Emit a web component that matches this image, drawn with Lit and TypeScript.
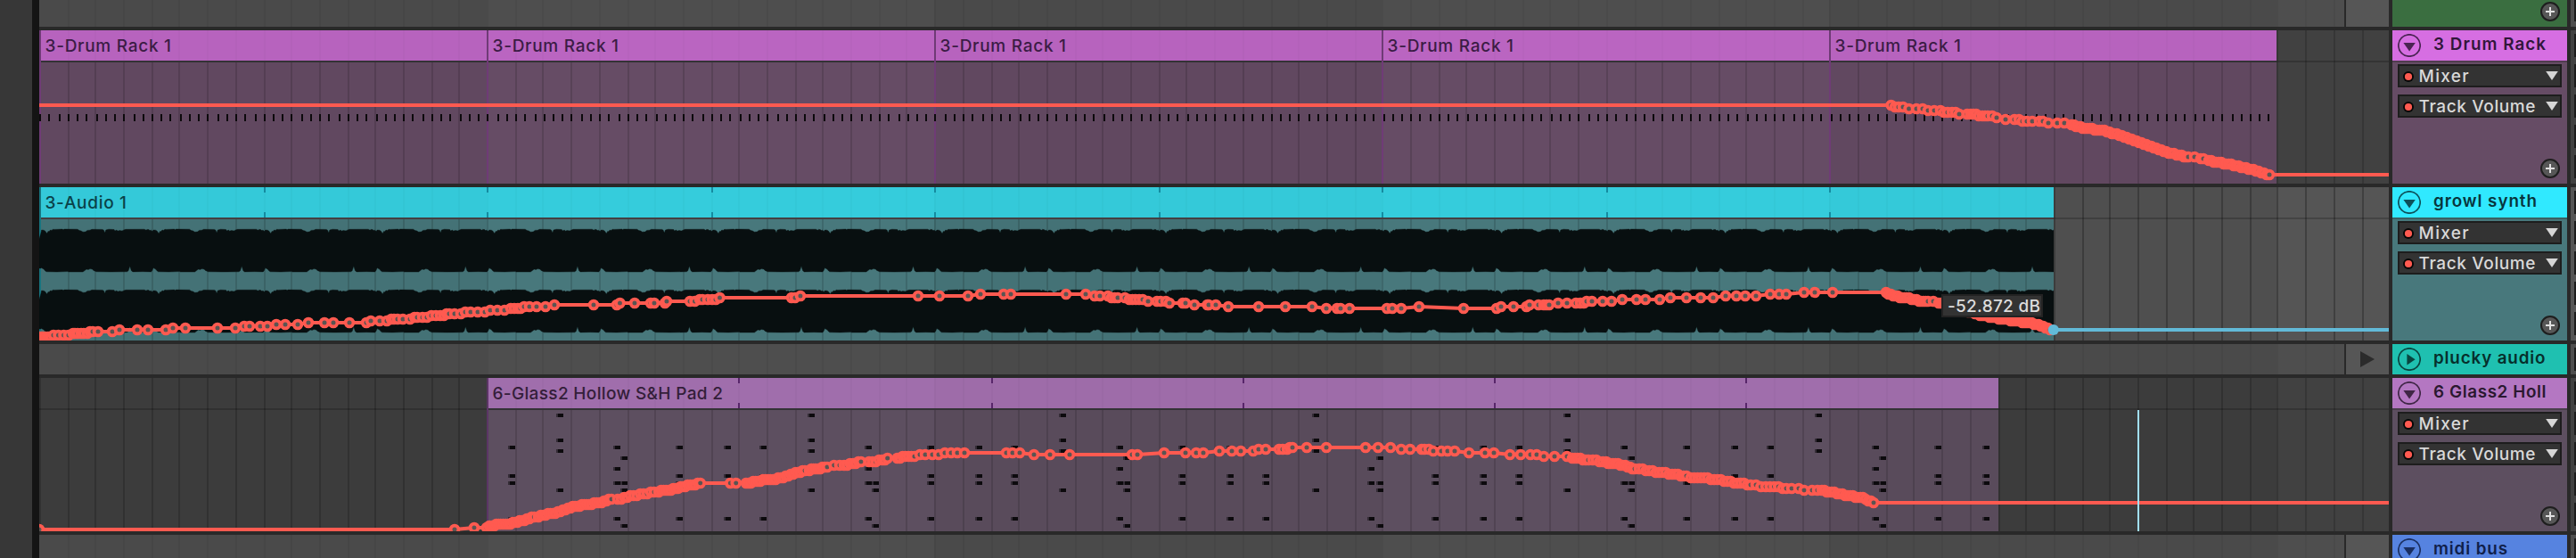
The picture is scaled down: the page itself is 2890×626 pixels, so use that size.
import { LitElement, html, svg, css, nothing } from "lit";
import { customElement, property } from "lit/decorators.js";

type Pt = [number, number];
interface Clip { from: number; to: number; name: string; marks?: number[] }
interface Lane {
  kind: "open" | "folded";
  top: number;
  height: number;
  base: string;
  grid: number;
  title?: string;
  color: string;
  panel?: string;
  ink?: string;
  clipHead?: string;
  clipBody?: string;
  clipEdge?: string;
  clipMark?: string;
  rule?: string;
  titleWidth?: number;
  labelWidth?: number;
  clips?: Clip[];
  content?: "ticks" | "wave" | "notes";
  play?: boolean;
}

const LEFT = 44;
const RIGHT = 2680;
const STEP = 31.387;
const RED = "#ff5a50";
const BLUE = "#62bad8";
const snap = (x: number) => 2 * Math.floor(x / 2);
const gridX = (k: number) => (k === 0 ? LEFT : snap(45 + STEP * k));

/* Fills a polyline with evenly spaced breakpoints. */
const run = (pts: Pt[], gap = 2.7): Pt[] => {
  const out: Pt[] = [];
  for (let i = 0; i < pts.length - 1; i++) {
    const [x0, y0] = pts[i];
    const [x1, y1] = pts[i + 1];
    const n = Math.max(1, Math.round((x1 - x0) / gap));
    for (let j = 0; j < n; j++) {
      out.push([x0 + ((x1 - x0) * j) / n, y0 + ((y1 - y0) * j) / n]);
    }
  }
  out.push(pts[pts.length - 1]);
  return out;
};
/* Breakpoints that share one level. */
const at = (y: number, ...xs: number[]): Pt[] => xs.map((x) => [x, y] as Pt);
/* Levels land on whole display points, two pixels each. */
const level = (pts: Pt[]): Pt[] => pts.map(([x, y]) => [x, 2 * Math.round(y / 2)] as Pt);

const drumNodes: Pt[] = level([
  ...at(118.5, 2121.6), ...at(120, 2126, 2130, 2135), ...at(122, 2141.6, 2150), ...at(122, 2157),
  ...at(124, 2163, 2170, 2177), ...at(125, 2181, 2185), ...at(126, 2190, 2194), ...at(128, 2198, 2207),
  ...at(128, 2211, 2214, 2217), ...at(130, 2220, 2224, 2227, 2230, 2235), ...at(132, 2240),
  ...at(134, 2250, 2260), ...at(134, 2265), ...at(136, 2269, 2274, 2280, 2288), ...at(136, 2292),
  ...at(138, 2298, 2308, 2316),
  ...run([[2324, 140], [2339, 144], [2361, 146.5], [2386, 154], [2408, 162], [2433, 171], [2445, 174.5], [2455, 176]]),
  ...at(176, 2462), ...at(177, 2469, 2472),
  ...run([[2478, 180], [2506, 185], [2531, 191], [2546, 196]], 2.8),
]);
const audioNodes: Pt[] = level([
  ...at(378, 45, 48, 51), ...at(377, 54, 57), ...at(376, 60, 65.5, 71.5, 77), ...at(374.5, 82),
  ...at(374, 84, 87, 91, 94, 98), ...at(372, 101, 104, 110, 126), ...at(370, 134, 154, 166, 186),
  ...at(368, 194, 208, 244, 264), ...at(366, 274, 280, 292, 300), ...at(364, 310, 320, 334),
  ...at(362, 346, 364, 374, 392), ...at(361, 411), ...at(360, 416, 426, 434), ...at(358, 439, 442, 446, 452, 460),
  ...at(356.5, 465), ...at(356, 468, 474, 479), ...at(354, 484, 489, 494, 498), ...at(352, 501, 504, 510, 517),
  ...at(350, 522, 528, 536, 544), ...at(348, 550, 558, 566), ...at(346, 573, 577, 581, 584),
  ...at(344, 588, 594, 602, 612), ...at(342, 622, 666, 692), ...at(340, 695.5, 712, 730, 734), ...at(339, 746),
  ...at(338, 748, 774, 779.5), ...at(336.5, 785, 788), ...at(336, 794, 799), ...at(335, 803),
  ...at(334, 807.5, 888, 892), ...at(332, 898, 1030, 1054, 1086), ...at(330, 1100, 1126, 1134, 1196, 1218),
  ...at(332, 1228, 1234, 1243), ...at(333, 1247, 1250.5), ...at(334, 1254, 1262), ...at(335.5, 1267, 1270.5, 1274),
  ...at(336.5, 1278, 1282), ...at(338, 1288, 1298, 1302, 1308), ...at(340, 1312, 1327, 1330),
  ...at(342, 1340), ...at(342, 1354.5, 1356, 1364), ...at(343.5, 1378), ...at(344, 1412, 1442, 1472),
  ...at(346, 1488, 1500, 1504, 1514, 1556, 1562, 1572), ...at(344, 1592), ...at(345.5, 1642, 1679),
  ...at(344, 1684, 1698), ...at(343, 1712.5), ...at(342, 1716, 1726, 1732, 1735, 1738),
  ...at(340, 1748, 1758, 1768, 1773), ...at(339, 1777), ...at(338, 1780, 1786, 1798, 1808),
  ...at(336, 1820, 1836, 1846, 1862), ...at(334, 1874, 1892, 1908, 1922), ...at(332, 1936, 1948, 1958, 1970),
  ...at(330, 1986, 1996, 2004), ...at(328, 2024, 2036, 2056),
  ...run([[2116, 328], [2124, 332], [2139, 334], [2153, 337], [2163, 338]]),
  ...at(338, 2169), ...run([[2175, 339], [2224, 354], [2261, 360], [2282, 363], [2300, 369]]),
]);
const padNodes: Pt[] = level([
  ...at(594, 44, 510), ...at(592, 532),
  ...run([[546, 592], [552, 589.5], [561.7, 588], [570, 588], [583, 584.5], [599.3, 580]]),
  ...run([[604, 579.5], [623, 575], [640, 569], [658, 566], [675, 563], [683, 560.5]]),
  ...at(560, 686, 693),
  ...run([[697, 559], [707, 556.7], [722, 554]], 3.6),
  ...run([[726, 553], [734, 552]], 4),
  ...run([[739, 551], [750, 550], [766, 546], [777, 543.5], [785.7, 542]]),
  ...at(542, 819.3, 825.7),
  ...run([[837, 542], [853, 539], [873, 536.7], [890, 531.7], [903, 528]]),
  ...run([[908, 527], [915, 526], [928, 524]]), ...at(522, 935.7, 942),
  ...run([[947, 521.5], [957, 520], [966, 518]], 3.2),
  ...run([[975, 518], [990, 516], [995.7, 514]], 3.4),
  ...run([[1006.7, 514], [1015.7, 512], [1026, 512]], 3.4),
  ...at(510.5, 1032, 1038, 1046, 1053), ...at(508.5, 1060, 1067, 1074, 1082),
  ...at(508, 1129, 1136, 1144), ...at(510, 1160, 1178, 1200, 1270, 1276),
  ...at(508, 1306, 1330, 1342, 1350), ...at(506.5, 1368), ...at(506, 1382, 1392, 1406),
  ...at(504, 1412, 1420, 1435, 1439, 1444), ...at(502.5, 1447, 1450), ...at(502, 1466, 1488, 1532, 1546, 1560),
  ...at(503, 1572), ...at(504, 1582, 1595, 1598), ...at(504.5, 1603), ...at(506, 1608, 1617, 1624), ...at(506.5, 1632),
  ...at(508, 1648, 1666, 1676), ...at(509.5, 1694), ...at(510, 1706, 1717, 1724), ...at(511, 1732),
  ...at(512, 1744, 1758),
  ...run([[1764, 513.5], [1773, 514.5], [1782, 516]], 3.4),
  ...run([[1787, 516.5], [1802, 518]], 4),
  ...run([[1804, 519], [1818, 521], [1834, 526]]),
  ...run([[1839, 526], [1854, 528.5], [1876, 532], [1892, 534]], 3.4),
  ...run([[1897, 535], [1912, 536], [1938, 540], [1964, 543.5]], 3.6),
  ...run([[1970, 544.5], [1981, 546], [2000, 547]], 5),
  ...at(548, 2004, 2010, 2018), ...at(549.5, 2024, 2033, 2039),
  ...run([[2044, 550.5], [2055, 552], [2073, 556], [2090, 558.5], [2102, 564]], 3),
]);

/* One repeat of the waveform outline: [offset, dent depth]. */
const WAVE_TOP: Pt[] = [[0, 1.2], [1.5, 2.6], [2.6, 1], [5, 1.2], [6.5, 2], [8.7, 5], [10, 2.4], [11, 2.8], [12.5, 1], [14, 1.4], [15.5, .3], [17, .4], [26, .1], [27, .8], [28, .1], [43, .2], [45, 1.6], [47, 2], [49, 3.2], [52, 3], [54, 1.4], [57, 1.2], [59, .3], [71, .4], [72.4, 1.2], [73.7, 4.2], [74.8, 1], [78, .2], [84, .5], [85, 2], [87, 1], [88, 2.2], [90, 1.6], [93, 1.9], [95, .9], [97, .3], [118, .2], [120, 1.3], [121, .4], [123, .6], [124, 1.6]];
const WAVE_BOTTOM: Pt[] = [[0, .1], [1, 1], [2.6, 4.4], [4.2, 3.6], [5.2, 3], [6.6, 1.2], [8, .2], [20, 0], [32, .4], [33, 0], [49, 0], [51, 1.4], [53, 3], [55, 2.6], [57, 3.4], [59.5, 3], [61, 1.6], [64, .2], [80, 0], [98.5, .2], [100, 1.2], [101.7, 6.4], [103.4, 1.2], [105, .1], [116, .3]];
const wavePath = (top: number, bottom: number, end: number) => {
  const period = STEP * 4;
  const up: string[] = [];
  const down: string[] = [];
  for (let i = 0; i * period < end - LEFT; i++) {
    for (const [u, d] of WAVE_TOP) up.push(`${(LEFT + i * period + u).toFixed(1)} ${(top + d).toFixed(1)}`);
    for (const [u, d] of WAVE_BOTTOM) down.push(`${(LEFT + i * period + u).toFixed(1)} ${(bottom - d).toFixed(1)}`);
  }
  up[0] = `44 ${top + 11}`;
  up[1] = `46 ${top + 4}`;
  down[0] = `44 ${bottom - 4}`;
  down[1] = `45.5 ${bottom - 4}`;
  return `M${up.join("L")}L${end + 9} ${top}L${end + 9} ${bottom}L${down.reverse().join("L")}Z`;
};

const NOTES: [number, number[]][] = [
  [570.4, [502, 534, 542, 582]],
  [624.6, [466, 494, 506, 550]],
  [688.4, [502, 526, 542, 582]],
  [696.6, [514, 542, 550, 590]],
  [758.6, [502, 534, 542, 582]],
  [813, [502, 534, 542, 582]],
];

const LANES: Lane[] = [
  { kind: "folded", top: 0, height: 30, base: "#4e4e4e", grid: .05, color: "#3a6e40" },
  {
    kind: "open", top: 34, height: 172, base: "#414141", grid: .17, title: "3 Drum Rack", titleWidth: 124, color: "#d66ee2",
    panel: "#664c65", ink: "#31163a", clipHead: "#ba65c1", clipBody: "#664c65", clipEdge: "#6f3b76", clipMark: "#6f3b76",
    rule: "#343236", labelWidth: 139.5, content: "ticks",
    clips: [0, 16, 32, 48, 64].map((k) => ({ from: k, to: k + 16, name: "3-Drum Rack 1" })),
  },
  {
    kind: "open", top: 210, height: 172, base: "#555555", grid: .24, title: "growl synth", titleWidth: 114, color: "#30e9ff",
    panel: "#48787c", ink: "#07363d", clipHead: "#35ccdc", clipBody: "#48787c", clipEdge: "#17747f", clipMark: "#158ba0",
    rule: "#433f42", labelWidth: 89.5, content: "wave",
    clips: [{ from: 0, to: 72, name: "3-Audio 1", marks: [8, 16, 24, 32, 40, 48, 56, 64] }],
  },
  { kind: "folded", top: 386, height: 34, base: "#4e4e4e", grid: .05, title: "plucky audio", titleWidth: 123.5, color: "#1fc0b0", ink: "#062f2c", play: true },
  {
    kind: "open", top: 424, height: 172, base: "#414141", grid: .17, title: "6 Glass2 Holl", titleWidth: 124.5, color: "#b477c2",
    panel: "#5d4f60", ink: "#2b1830", clipHead: "#a06eac", clipBody: "#5d4f60", clipEdge: "#5b3565", clipMark: "#57256a",
    rule: "#343236", labelWidth: 256.5, content: "notes",
    clips: [{ from: 16, to: 70, name: "6-Glass2 Hollow S&H Pad 2", marks: [25, 34, 43, 52, 61] }],
  },
  { kind: "folded", top: 600, height: 26, base: "#4e4e4e", grid: .05, title: "midi bus", titleWidth: 81, color: "#5683e0", ink: "#10204a" },
];

/* Text tracked out to a fixed measure. */
@customElement("fit-label")
class FitLabel extends LitElement {
  @property() text = "";
  @property({ type: Number }) measure = 0;
  static styles = css`
    :host { display: block; white-space: pre; }
  `;
  render() {
    return html`<span>${this.text}</span>`;
  }
  updated() {
    const span = this.renderRoot.querySelector("span")!;
    span.style.letterSpacing = "0px";
    const natural = span.getBoundingClientRect().width;
    span.style.letterSpacing = `${(this.measure + 2 - natural) / (this.text.length - 1)}px`;
  }
}

@customElement("device-chooser")
class DeviceChooser extends LitElement {
  @property() label = "";
  @property({ type: Number }) measure = 0;
  static styles = css`
    :host { display: block; }
    .box {
      box-sizing: border-box; display: flex; align-items: center; width: 184px; height: 26px;
      border: 2px solid #1d1d1d; background: #333; color: #d9d9d9; padding: 0 2.5px 0 4px;
      font: 500 19px/20px Inter, sans-serif;
    }
    .led { width: 12px; height: 12px; margin: 2px 5.5px 0 0; flex: none; }
    .arrow { width: 14px; height: 10px; margin: 0 0 1px auto; flex: none; }
    fit-label { width: 132px; padding-top: 2px; }
  `;
  render() {
    return html`<div class="box">
      <svg class="led" viewBox="0 0 12 12"><circle cx="6" cy="6" r="6" fill="#060606" /><circle cx="6" cy="6" r="4.1" fill=${RED} /></svg>
      <fit-label .text=${this.label} .measure=${this.measure}></fit-label>
      <svg class="arrow" viewBox="0 0 14 10"><path d="M.2 0H13.8L7 10Z" fill="#d6d6d6" /></svg>
    </div>`;
  }
}

@customElement("track-header")
class TrackHeader extends LitElement {
  @property({ attribute: false }) lane!: Lane;
  static styles = css`
    :host { display: block; overflow: hidden; }
    .track { display: flex; flex-direction: column; height: 100%; }
    .title { flex: none; display: flex; height: 34px; padding-left: 6px; font: 600 18.8px/32px Inter, sans-serif; }
    .fold { width: 26px; height: 26px; margin: 4px 14px 0 0; flex: none; opacity: .85; }
    .rule { flex: none; height: 2px; background: rgba(0, 0, 0, .2); }
    .choosers { display: flex; flex-direction: column; gap: 8px; padding: 2px 0 0 6px; }
    .foot { margin: auto 8px 6px auto; width: 22px; height: 22px; }
  `;
  render() {
    const l = this.lane;
    const arrow = l.play ? "M10.4 7L19.6 13.2L10.4 19.6Z" : "M6.4 10H19.8L13.1 19.4Z";
    return html`<div class="track" style="background:${l.panel ?? l.color}">
      ${l.title
        ? html`<div class="title" style="background:${l.color};color:${l.ink}">
            <svg class="fold" viewBox="0 0 26 26">
              <circle cx="13" cy="13" r="12.2" fill="none" stroke=${l.ink!} stroke-width="1.7" />
              <path d=${arrow} fill=${l.ink!} />
            </svg>
            <fit-label .text=${l.title} .measure=${l.titleWidth!}></fit-label>
          </div>`
        : nothing}
      ${l.kind === "open"
        ? html`<div class="rule"></div>
            <div class="choosers">
              <device-chooser label="Mixer" .measure=${54}></device-chooser>
              <device-chooser label="Track Volume" .measure=${129}></device-chooser>
            </div>`
        : nothing}
      ${l.kind === "open" || !l.title
        ? html`<svg class="foot" viewBox="0 0 22 22">
            <circle cx="11" cy="11" r="10" fill="#575757" stroke="#1e1e1e" stroke-width="2" />
            <path d="M6 11H16M11 6V16" stroke="#e0e0e0" stroke-width="2" />
          </svg>`
        : nothing}
    </div>`;
  }
}

@customElement("track-lane")
class TrackLane extends LitElement {
  @property({ attribute: false }) lane!: Lane;
  static styles = css`
    :host { display: block; }
    .lane { display: grid; overflow: hidden; height: 100%; }
    .art, .names { grid-area: 1 / 1; min-width: 0; }
    .art { display: block; }
    .names { display: flex; height: 36px; font: 450 19px/36px Inter, sans-serif; }
    .name { flex: none; box-sizing: border-box; padding-left: 6.5px; opacity: .92; }
  `;

  grid(y: number, h: number, alpha: number, from = 1, to = 84) {
    const xs: number[] = [];
    for (let k = from; k < to; k++) xs.push(gridX(k));
    return svg`<path d=${xs.map((x) => `M${x} ${y}h2v${h}h-2z`).join("")} fill="#000" fill-opacity=${alpha} />`;
  }

  content(l: Lane) {
    if (l.content === "ticks") {
      let d = "";
      for (let k = 0; k < 240; k++) d += `M${k ? snap(45.5 + (k * STEP) / 3) : LEFT} 128h2v8h-2z`;
      return svg`<path d=${d} fill="#0c090c" />`;
    }
    if (l.content === "notes") {
      let dark = "";
      let soft = "";
      for (let r = 0; r < 6; r++) {
        for (const [x, ys] of NOTES) {
          const nx = snap(x + r * STEP * 9);
          if (nx > gridX(70) - 4) continue;
          for (const y of ys) {
            soft += `M${nx} ${y - 2}h2v4h-2z`;
            dark += `M${nx + 2} ${y - 2}h6v4h-6z`;
          }
        }
      }
      return svg`<path d=${soft} fill="#342c36" /><path d=${dark} fill="#0c0a0d" />`;
    }
    const end = gridX(72);
    return svg`
      <clipPath id="audio"><rect x=${LEFT} y="246" width=${end - LEFT} height="136" /></clipPath>
      <g clip-path="url(#audio)" fill="#080f10" stroke="#080f10" stroke-opacity=".5" stroke-width=".8">
        <path d=${wavePath(257, 305, end)} /><path d=${wavePath(325, 373, end)} />
      </g>`;
  }

  automation(l: Lane) {
    const [nodes, start, end] = l.content === "ticks"
      ? [drumNodes, [[LEFT, 118], [2116, 118]], [[RIGHT, 196]]]
      : l.content === "wave"
        ? [audioNodes, [], []]
        : [padNodes, [], [[RIGHT, 564]]];
    const line = [...(start as Pt[]), ...nodes, ...(end as Pt[])];
    return svg`
      <polyline points=${line.map((p) => p.join(",")).join(" ")} fill="none" stroke=${RED} stroke-width="4" />
      ${nodes.map(([x, y]) => svg`<circle cx=${x} cy=${y} r="4.4" fill="#5a5452" stroke=${RED} stroke-width="3.8" />`)}
      ${l.content === "wave"
        ? svg`<path d="M2304 370H2680" stroke=${BLUE} stroke-width="4" /><circle cx="2303.8" cy="370" r="6.1" fill=${BLUE} />`
        : nothing}
      ${l.content === "notes" ? svg`<rect x="2398" y="460" width="2" height="136" fill="#a2e0fa" />` : nothing}`;
  }

  /* Every other sixteen-step group is drawn slightly darker. */
  bands(y: number, height: number, alpha: number, from = 0, to = 80) {
    return [0, 32, 64].map((k) => {
      const a = Math.max(k, from);
      const b = Math.min(k + 16, to);
      return b > a
        ? svg`<rect x=${gridX(a)} y=${y} width=${gridX(b) - gridX(a)} height=${height} fill="#000" fill-opacity=${alpha} />`
        : nothing;
    });
  }

  render() {
    const l = this.lane;
    const clips = l.clips ?? [];
    const first = clips.length ? clips[0].from : 0;
    const last = clips.length ? clips[clips.length - 1].to : 0;
    const x0 = gridX(first);
    const x1 = gridX(last);
    const body = l.top + 36;
    return html`<div class="lane">
      <svg class="art" width="2636" height=${l.height} viewBox="${LEFT} ${l.top} 2636 ${l.height}">
        <rect x=${LEFT} y=${l.top} width="2636" height=${l.height} fill=${l.base} />
        ${l.kind === "open"
          ? svg`
            ${this.bands(l.top, l.height, .07)}
            ${this.grid(l.top, l.height, l.grid, first > 0 ? 0 : last, 84)}
            <rect x=${LEFT} y=${l.top + 34} width="2636" height="2" fill="#000" fill-opacity=".2" />
            <rect x=${x0} y=${l.top} width=${x1 - x0} height="34" fill=${l.clipHead!} />
            <rect x=${x0} y=${body} width=${x1 - x0} height="136" fill=${l.clipBody!} />
            ${this.bands(l.top, 34, .013, first, last)}
            ${this.bands(body, 136, .045, first, last)}
            ${this.grid(l.top, 34, .02, first + 1, last)}
            ${this.grid(body, 136, .13, first + 1, last)}
            <rect x=${x0} y=${l.top + 34} width=${x1 - x0} height="2" fill=${l.rule!} />
            ${clips.map((c) => svg`<rect x=${gridX(c.from)} y=${l.top} width="2" height="172" fill=${l.clipEdge!} />
              ${(c.marks ?? []).map((m) => svg`<path d="M${gridX(m)} ${l.top}h2v6h-2zM${gridX(m)} ${l.top + 28}h2v6h-2z" fill=${l.clipMark!} />`)}`)}
            ${this.content(l)}
            ${this.automation(l)}`
          : svg`
            ${this.bands(l.top, l.height, .05)}
            ${this.grid(l.top, l.height, l.grid, 1, 83)}
            <rect x="2630" y=${l.top} width="2" height=${l.height} fill="#292929" />
            <rect x="2632" y=${l.top} width="48" height=${l.height} fill="#565656" />
            ${l.play ? svg`<path d="M2648 394L2664 403L2648 412Z" fill="#2b2b2b" />` : nothing}`}
      </svg>
      ${clips.length
        ? html`<div class="names" style="margin-left:${x0 - LEFT}px;color:${l.ink}">
            ${clips.map((c) => html`<div class="name" style="width:${gridX(c.to) - gridX(c.from)}px">
              <fit-label .text=${c.name} .measure=${l.labelWidth!}></fit-label>
            </div>`)}
          </div>`
        : nothing}
    </div>`;
  }
}

@customElement("app-root")
class AppRoot extends LitElement {
  static styles = css`
    :host { display: block; width: 2890px; height: 626px; overflow: hidden; background: #292929; }
    .view { position: relative; display: grid; grid-template-columns: 36px 8px 2636px 200px 10px; height: 626px; }
    .margin { background: #373737; }
    .gutter { background: #141414; }
    .column { display: flex; flex-direction: column; gap: 4px; }
    .headers, .mixer { padding-left: 4px; }
    .slot { flex: none; overflow: hidden; }
    .cells { display: flex; flex-direction: column; gap: 8px; padding: 4px 0 0 4px; }
    .cell { flex: none; height: 26px; background: #1c1c1c; }
    .readout {
      position: absolute; left: 2178px; top: 330px; box-sizing: border-box; width: 114px; height: 26px;
      border: 2px solid #232323; background: #333; color: #dcdcdc; padding-left: 5px;
      font: 500 19px/24px Inter, sans-serif;
    }
  `;
  render() {
    return html`<div class="view">
      <div class="margin"></div>
      <div class="gutter"></div>
      <div class="column">
        ${LANES.map((l) => html`<track-lane class="slot" style="height:${l.height}px" .lane=${l}></track-lane>`)}
      </div>
      <div class="column headers">
        ${LANES.map((l) => html`<track-header class="slot" style="height:${l.height}px" .lane=${l}></track-header>`)}
      </div>
      <div class="column mixer">
        ${LANES.map((l) => html`<div class="slot" style="height:${l.height}px;background:${l.base}">
          <div class="cells" style="margin-top:${l.top === 0 ? -6 : 0}px">${Array.from({ length: l.kind === "open" ? 5 : 1 }, () => html`<div class="cell"></div>`)}</div>
        </div>`)}
      </div>
      <div class="readout"><fit-label text="-52.872 dB" .measure=${102}></fit-label></div>
    </div>`;
  }
}
